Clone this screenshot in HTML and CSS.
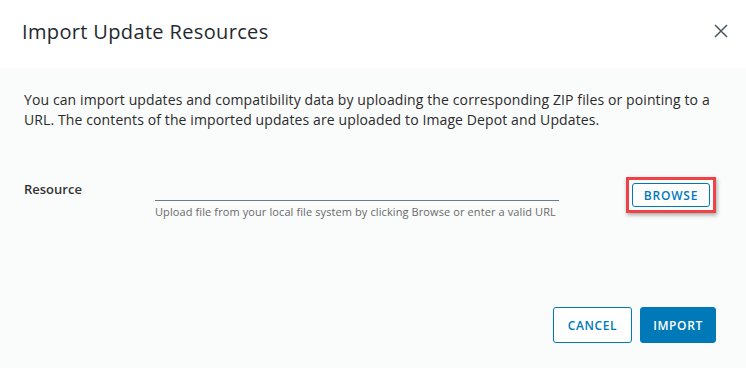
FILE: index.html
```html
<!DOCTYPE html>
<html lang="en">
<head>
  <meta charset="UTF-8" />
  <title>Import Update Resources</title>
  <link rel="stylesheet" href="styles.css">
</head>
<body>
  <div class="modal">
    <div class="modal-header">
      <h3>Import Update Resources</h3>
      <button class="close" aria-label="Close">
        <svg width="14" height="14" viewBox="0 0 14 14">
          <path d="M1 1 L13 13 M13 1 L1 13" stroke="#49585f" stroke-width="1.5" fill="none"/>
        </svg>
      </button>
    </div>
    <div class="modal-body">
      <p class="intro">You can import updates and compatibility data by uploading the corresponding ZIP files or pointing to a URL. The contents of the imported updates are uploaded to Image Depot and Updates.</p>
      <div class="form-row">
        <label>Resource</label>
        <div class="field">
          <input type="text" />
          <span class="helper">Upload file from your local file system by clicking Browse or enter a valid URL</span>
        </div>
        <div class="highlight">
          <button class="btn btn-outline btn-sm">Browse</button>
        </div>
      </div>
    </div>
    <div class="modal-footer">
      <button class="btn btn-outline">Cancel</button>
      <button class="btn btn-primary">Import</button>
    </div>
  </div>
</body>
</html>
```

FILE: styles.css
```css
:root {
  --blue: #0079b8;
  --text: #313131;
  --muted: #6a6a6a;
  --body-bg: #fafbfb;
}

* {
  box-sizing: border-box;
}

body {
  margin: 0;
  font-family: 'Open Sans', sans-serif;
  color: var(--text);
  background: var(--body-bg);
}

.modal {
  width: 746px;
  height: 368px;
  display: flex;
  flex-direction: column;
}

.modal-header {
  background: white;
  height: 68px;
  display: flex;
  justify-content: space-between;
  align-items: center;
  padding: 0 22px 6px 22px;
}

.modal-header h3 {
  margin: 0;
  font-size: 20px;
  font-weight: 400;
  letter-spacing: 0.35px;
  color: #1f2a30;
}

.close {
  border: none;
  background: none;
  padding: 0;
  margin-right: -4px;
  display: flex;
  cursor: pointer;
}

.modal-body {
  flex: 1;
  padding: 22px 24px 0 24px;
}

.intro {
  margin: 0;
  font-size: 14px;
  line-height: 20px;
  letter-spacing: 0.11px;
  color: #2b2b2b;
}

.form-row {
  display: flex;
  align-items: flex-start;
  margin-top: 49px;
}

.form-row label {
  width: 131px;
  font-size: 13px;
  font-weight: 600;
  color: #333;
  padding-top: 1px;
}

.field {
  width: 404px;
  display: flex;
  flex-direction: column;
  padding-top: 6px;
}

.field input {
  border: none;
  border-bottom: 1px solid #6f7b82;
  background: transparent;
  height: 16px;
  padding: 0;
  outline: none;
}

.helper {
  font-size: 11px;
  letter-spacing: 0.1px;
  color: #6a6a6a;
  margin-top: 3px;
}

.highlight {
  margin-left: 67px;
  margin-top: -2px;
  border: 3px solid #ee4148;
  padding: 3px;
  box-shadow: 1px 2px 4px rgba(0, 0, 0, 0.35);
}

.btn {
  font-family: 'Open Sans', sans-serif;
  text-transform: uppercase;
  font-weight: 600;
  font-size: 12px;
  letter-spacing: 0.6px;
  border-radius: 3px;
  height: 36px;
  padding: 0 12px;
  cursor: pointer;
}

.btn-sm {
  height: 24px;
  width: 78px;
  font-size: 12px;
  letter-spacing: 0.8px;
  padding: 0;
  display: block;
}

.btn-outline {
  background: white;
  border: 1px solid var(--blue);
  color: var(--blue);
}

.btn-primary {
  background: var(--blue);
  border: 1px solid var(--blue);
  color: white;
}

.modal-footer {
  display: flex;
  justify-content: flex-end;
  gap: 8px;
  padding: 0 30px 25px 0;
}

.modal-footer .btn-outline {
  width: 79px;
}

.modal-footer .btn-primary {
  width: 76px;
}
```
